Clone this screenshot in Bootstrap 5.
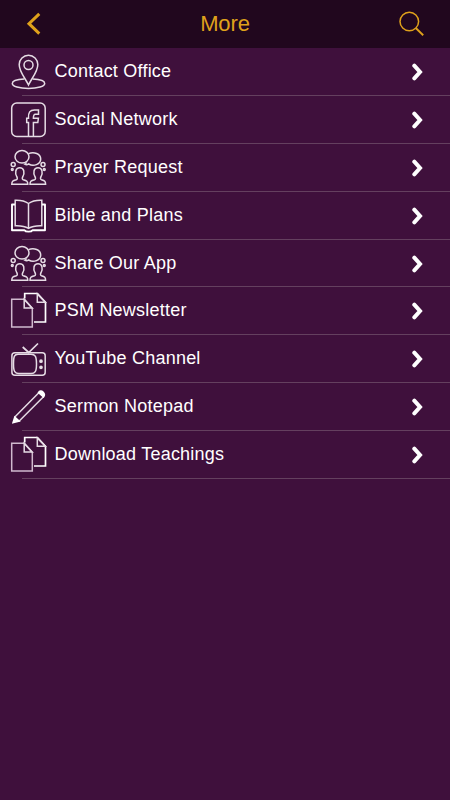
<!DOCTYPE html>
<html lang="en">
<head>
<meta charset="utf-8">
<meta name="viewport" content="width=device-width, initial-scale=1">
<title>More</title>
<link href="https://cdn.jsdelivr.net/npm/bootstrap@5.3.0/dist/css/bootstrap.min.css" rel="stylesheet">
<style>
body { background: #3f103c; font-family: "Liberation Sans", Arial, sans-serif; color: #fff; }
.topbar { height: 48px; background: #21071e; color: #dfa11b; }
.topbar h1 { font-size: 22px; line-height: 48px; letter-spacing: -.1px; }
.side { width: 78px; height: 48px; }
.menu-row { height: 47.875px; font-size: 18px; line-height: 46px; color: #fff; text-decoration: none;
  background: linear-gradient(#64405f, #64405f) 22px 100% / 100% 1px no-repeat; }
.menu-row:hover { color: #fff; }
.menu-icon { width: 48px; height: 48px; margin-right: 6.5px; fill: none; stroke: #e6dce5; stroke-width: 1.5; }
.menu-label { letter-spacing: .22px; }
.chev { width: 14px; height: 18px; margin: 15px 25.5px 0 0; fill: none; stroke: #fff; stroke-width: 4; }
</style>
</head>
<body>
<svg class="d-none">
  <symbol id="people" viewBox="0 0 48 48">
    <ellipse cx="22" cy="12.800" rx="7" ry="6.300"/>
    <path d="M28.500 9.600C34 7.200 40.700 9.800 40.700 15c0 5.200-7.200 8-12 5-1.300.8-2.800.8-3.900.1 1.200-.5 1.600-.9 1.800-1.700"/>
    <circle cx="13.200" cy="20.500" r="2"/><circle cx="43" cy="20.500" r="2"/>
    <circle cx="12.300" cy="25.500" r=".9"/><circle cx="44.300" cy="25.500" r=".9"/>
    <path d="M11.800 40.300c0-3 .8-3.500 4.500-4.500 1.300-.5 1.200-2 .4-3.300-1.800-3.700-1.500-8.800 3.100-8.800s4.900 5.100 3.100 8.800c-.8 1.300-.9 2.800.4 3.300 3.500 1 4.500 1.500 4.500 4.500z"/>
    <path d="M30 40.300c0-3 .8-3.500 4.500-4.500 1.300-.5 1.200-2 .4-3.300-1.800-3.700-1.500-8.800 3.100-8.800s4.900 5.100 3.100 8.800c-.8 1.300-.9 2.800.4 3.300 3.300 1 4.100 1.500 4.100 4.500z"/>
  </symbol>
  <symbol id="docs" viewBox="0 0 48 48">
    <path d="M11.700 12.300h12.800l7.800 9.200v18.500H11.700z" stroke="#d0b9ce"/>
    <path d="M24.200 12.500v8.500h8z"/>
    <path d="M24.700 11.500V6.500H37.500l8 8.800V35H34" stroke="#fff" stroke-width="1.700"/>
    <path d="M37.300 7v8.200h8z"/>
  </symbol>
  <symbol id="chevron" viewBox="0 0 14 18"><path d="m3.300 2.700 5.700 6.300-5.700 6.300" stroke-linecap="round"/></symbol>
</svg>

<header class="topbar d-flex align-items-start justify-content-between">
  <svg class="side" viewBox="0 0 78 48" fill="none" stroke="#dfa11b" stroke-width="3"><path d="M39.300 13.800 29 23.700l10.300 9.900"/></svg>
  <h1 class="m-0 fw-normal">More</h1>
  <svg class="side" viewBox="372 0 78 48" fill="none" stroke="#dfa11b" stroke-width="1.500"><circle cx="409.300" cy="21.500" r="9.300"/><path d="m416 28.200 7.200 7" stroke-width="1.900"/></svg>
</header>

<nav class="d-flex flex-column">
  <a class="menu-row d-flex align-items-start" href="#">
    <svg class="menu-icon" viewBox="0 0 48 48"><path d="M28.500 37C25 29.500 19.200 24 19.200 16.500a9.300 9.300 0 0 1 18.600 0C37.800 24 32 29.500 28.500 37z"/><circle cx="28.500" cy="17" r="4.500"/><path d="M24.300 31.100C17 31.400 12.300 33.100 12.300 35.500c0 2.900 7 5 16.200 5s16.200-2.100 16.200-5c0-2.400-4.700-4.100-12-4.400"/></svg>
    <span class="menu-label flex-grow-1">Contact Office</span><svg class="chev"><use href="#chevron"/></svg>
  </a>
  <a class="menu-row d-flex align-items-start" href="#">
    <svg class="menu-icon" viewBox="0 0 48 48"><rect x="11.700" y="7" width="33.500" height="33.500" rx="5"/><path d="M28.500 40V26.500h-1.800v-4.200h1.800c-.4-6 1.500-8.300 6-8.300h4v4.300h-3.200c-1.700 0-1.900 1.200-1.900 4h5l-.6 4.200h-4.400V40"/></svg>
    <span class="menu-label flex-grow-1">Social Network</span><svg class="chev"><use href="#chevron"/></svg>
  </a>
  <a class="menu-row d-flex align-items-start" href="#">
    <svg class="menu-icon"><use href="#people"/></svg>
    <span class="menu-label flex-grow-1">Prayer Request</span><svg class="chev"><use href="#chevron"/></svg>
  </a>
  <a class="menu-row d-flex align-items-start" href="#">
    <svg class="menu-icon" viewBox="0 0 48 48"><path d="M28.500 11.500C25 9 20 8 15.200 8.200v25.500c5-.2 10 .6 13.300 2.600 3.300-2 8.300-2.800 13.300-2.600V8.200C37 8 32 9 28.500 11.500zV36"/><path d="M15 12.500h-3V38.300h12.500c1 1.800 7 1.800 8 0H45v-25.800h-3" stroke="#fff" stroke-width="1.900" stroke-linejoin="round"/></svg>
    <span class="menu-label flex-grow-1">Bible and Plans</span><svg class="chev"><use href="#chevron"/></svg>
  </a>
  <a class="menu-row d-flex align-items-start" href="#">
    <svg class="menu-icon"><use href="#people"/></svg>
    <span class="menu-label flex-grow-1">Share Our App</span><svg class="chev"><use href="#chevron"/></svg>
  </a>
  <a class="menu-row d-flex align-items-start" href="#">
    <svg class="menu-icon"><use href="#docs"/></svg>
    <span class="menu-label flex-grow-1">PSM Newsletter</span><svg class="chev"><use href="#chevron"/></svg>
  </a>
  <a class="menu-row d-flex align-items-start" href="#">
    <svg class="menu-icon" viewBox="0 0 48 48"><rect x="11.900" y="17.700" width="33.300" height="22.500" rx="3"/><path d="M18 19.200h13c4 0 5.500 2 5.500 9.700s-1.500 9.700-5.500 9.700H19c-4 0-5.500-2-5.500-9.700s1-9.700 4.500-9.700z"/><path d="m22.700 12 6 5.500L38 8.500" stroke-width="1.700"/><circle cx="41" cy="26.200" r="1.100" fill="#fff"/><circle cx="41" cy="32.300" r="1.100" fill="#fff"/></svg>
    <span class="menu-label flex-grow-1">YouTube Channel</span><svg class="chev"><use href="#chevron"/></svg>
  </a>
  <a class="menu-row d-flex align-items-start" href="#">
    <svg class="menu-icon" viewBox="0 0 48 48"><path d="m14.800 34 24-24.300M19 38.200l24.500-24.500"/><path d="m14.800 34-1.800 5.600 6.200-1.500zM38.500 9.500c1-2 3.200-1.800 4.500-.5s2 3.200.5 5z" fill="#fff" stroke="#fff"/></svg>
    <span class="menu-label flex-grow-1">Sermon Notepad</span><svg class="chev"><use href="#chevron"/></svg>
  </a>
  <a class="menu-row d-flex align-items-start" href="#">
    <svg class="menu-icon"><use href="#docs"/></svg>
    <span class="menu-label flex-grow-1">Download Teachings</span><svg class="chev"><use href="#chevron"/></svg>
  </a>
</nav>
<script src="https://cdn.jsdelivr.net/npm/bootstrap@5.3.0/dist/js/bootstrap.bundle.min.js"></script>
</body>
</html>
